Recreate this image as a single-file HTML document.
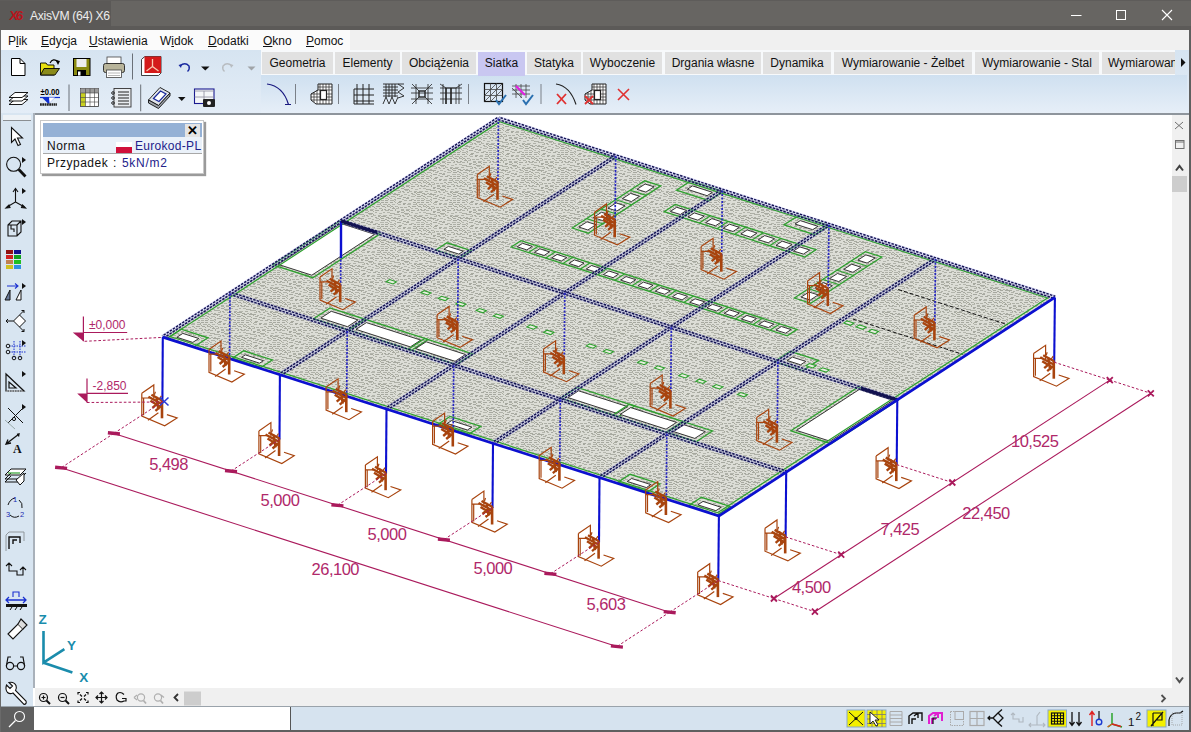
<!DOCTYPE html>
<html><head><meta charset="utf-8"><style>
*{margin:0;padding:0;box-sizing:border-box}
html,body{width:1191px;height:732px;overflow:hidden;background:#fff;font-family:"Liberation Sans",sans-serif}
.a{position:absolute}
#title{left:0;top:0;width:1191px;height:30px;background:linear-gradient(#5e5c5a 0,#5e5c5a 1px,#676562 1px,#676562 26px,#5c5a58 26px)}
#titlea{left:0;top:1px;width:111px;height:29px;background:#5b5957}
#menu{left:0;top:30px;width:1191px;height:20px;background:#f0f0f0}
#menuw{left:0;top:30px;width:350px;height:20px;background:#fbfbfb}
.mi{position:absolute;top:34px;font-size:12px;color:#111}
#tb{left:0;top:50px;width:1191px;height:64px;background:linear-gradient(#d6e4f1,#e4edf7)}
#tabs{left:261px;top:50px;width:914px;height:26px;background:#f7f9fb}
.tab{position:absolute;top:52px;height:22px;background:#e1e1e1;font-size:12px;color:#111;text-align:center;line-height:22px}
#ttb{left:261px;top:75px;width:926px;height:39px;background:linear-gradient(#cfe0f0,#e7eff8)}
#tbbot{left:33px;top:113px;width:1158px;height:2px;background:#8e959c}
#lt{left:0;top:113px;width:33px;height:594px;background:#d8e5f1}
#grip{left:3px;top:115px;width:28px;height:6px;background:#eef2f6;border-bottom:1px solid #8a8e92}
#ltb{left:33px;top:113px;width:2px;height:575px;background:#a9b1ba}
#rs{left:1172px;top:115px;width:17px;height:592px;background:#f0f0f0}
#bt{left:35px;top:688px;width:1137px;height:19px;background:#f0f0f0}
#sb{left:0;top:706px;width:1191px;height:26px;background:#d6e3ef}
#sbl{left:0;top:706px;width:1191px;height:1px;background:#9aa3ab}
#srch{left:0;top:707px;width:34px;height:23px;background:#5f5f5f}
#inp{left:34px;top:707px;width:257px;height:23px;background:#fff;border-right:1px solid #555}
#bb{left:0;top:730px;width:1191px;height:2px;background:#5f5f5f}
#rb{left:1189px;top:30px;width:2px;height:702px;background:#5f5f5f}
#lb{left:0;top:30px;width:1px;height:702px;background:#6a6a6a}
svg{position:absolute;left:0;top:0}
</style></head><body>
<div class="a" id="title"></div>
<div class="a" id="titlea"></div>
<div class="a" id="menu"></div>
<div class="a" id="menuw"></div>
<div class="a" id="tb"></div>
<div class="a" id="tabs"></div>
<div class="a" id="ttb"></div>
<div class="a" id="tbbot"></div>
<div class="a" id="lt"></div>
<div class="a" id="ltb"></div>
<div class="a" id="grip"></div>
<div class="a" id="rs"></div>
<div class="a" id="bt"></div>
<div class="a" id="sb"></div>
<div class="a" id="sbl"></div>
<div class="a" id="srch"></div>
<div class="a" id="inp"></div>
<div class="a" id="bb"></div>
<div class="a" id="rb"></div>
<div class="a" id="lb"></div>
<div class="a" style="left:30px;top:9px;font-size:12.2px;color:#ececec;letter-spacing:-0.35px">AxisVM (64) X6</div>
<div class="a mi" style="left:8px"><u style="text-decoration:none">P</u><u>l</u>ik</div>
<div class="a mi" style="left:41px"><u>E</u>dycja</div>
<div class="a mi" style="left:89px"><u>U</u>stawienia</div>
<div class="a mi" style="left:160px">W<u>i</u>dok</div>
<div class="a mi" style="left:208px"><u>D</u>odatki</div>
<div class="a mi" style="left:263px"><u>O</u>kno</div>
<div class="a mi" style="left:306px"><u>P</u>omoc</div>
<div class="tab" style="left:262px;width:71px">Geometria</div>
<div class="tab" style="left:335px;width:65px">Elementy</div>
<div class="tab" style="left:402px;width:74px">Obciążenia</div>
<div class="tab" style="left:478px;width:47px;height:24px;background:#c9c7f1">Siatka</div>
<div class="tab" style="left:527px;width:54px">Statyka</div>
<div class="tab" style="left:583px;width:79px">Wyboczenie</div>
<div class="tab" style="left:665px;width:96px">Drgania własne</div>
<div class="tab" style="left:763px;width:68px">Dynamika</div>
<div class="tab" style="left:834px;width:138px">Wymiarowanie - Żelbet</div>
<div class="tab" style="left:975px;width:124px">Wymiarowanie - Stal</div>
<div class="tab" style="left:1102px;width:73px;text-align:left;padding-left:6px;overflow:hidden;white-space:nowrap">Wymiarowanie</div>
<div class="a" style="left:40px;top:120px;width:164px;height:54px;background:#fff;border:1px solid #c8c8c8;box-shadow:2px 2px 1px #9a9a9a"></div>
<div class="a" style="left:43px;top:123px;width:159px;height:14px;background:#95b1d5"></div>
<div class="a" style="left:185px;top:124px;width:15px;height:13px;background:#e4e4e4;font-size:13px;font-weight:bold;line-height:13px;text-align:center;color:#000">✕</div>
<div class="a" style="left:43px;top:137px;width:159px;height:17px;background:#eaf1f9;border-bottom:1px solid #a8a8a8"></div>
<div class="a" style="left:47px;top:139px;font-size:12px;letter-spacing:0.5px;color:#111">Norma</div>
<div class="a" style="left:116px;top:142px;width:16px;height:5px;background:#fff"></div>
<div class="a" style="left:116px;top:147px;width:16px;height:6px;background:#d0103a"></div>
<div class="a" style="left:135px;top:139px;font-size:12px;letter-spacing:0.3px;color:#22228a">Eurokod-PL</div>
<div class="a" style="left:47px;top:156px;font-size:12px;letter-spacing:0.5px;color:#111">Przypadek</div><div class="a" style="left:113px;top:156px;font-size:12px;color:#111">:</div><div class="a" style="left:122px;top:156px;font-size:12px;letter-spacing:0.7px;color:#22228a">5kN/m2</div>

<svg width="1191" height="732" viewBox="0 0 1191 732">
<defs><pattern id="mesh" width="36" height="24" patternUnits="userSpaceOnUse"><rect width="36" height="24" fill="#dcddd6"/><rect x="2" y="0" width="3" height="1" fill="#b4b6ad"/><rect x="7" y="0" width="2" height="1" fill="#b4b6ad"/><rect x="11" y="0" width="2" height="1" fill="#a6a89f"/><rect x="15" y="1" width="2" height="1" fill="#a6a89f"/><rect x="18" y="0" width="2" height="1" fill="#a6a89f"/><rect x="20" y="1" width="1" height="1" fill="#a8aa9c"/><rect x="22" y="0" width="4" height="1" fill="#a6a89f"/><rect x="26" y="1" width="1" height="1" fill="#a8aa9c"/><rect x="27" y="1" width="2" height="1" fill="#a6a89f"/><rect x="31" y="1" width="2" height="1" fill="#aeb0a7"/><rect x="33" y="2" width="1" height="1" fill="#a8aa9c"/><rect x="34" y="1" width="2" height="1" fill="#aeb0a7"/><rect x="0" y="2" width="4" height="1" fill="#a6a89f"/><rect x="5" y="3" width="2" height="1" fill="#aeb0a7"/><rect x="8" y="2" width="3" height="1" fill="#b4b6ad"/><rect x="12" y="3" width="2" height="1" fill="#b4b6ad"/><rect x="16" y="2" width="3" height="1" fill="#b4b6ad"/><rect x="19" y="3" width="1" height="1" fill="#a8aa9c"/><rect x="21" y="2" width="3" height="1" fill="#a6a89f"/><rect x="25" y="3" width="2" height="1" fill="#a6a89f"/><rect x="28" y="2" width="3" height="1" fill="#a6a89f"/><rect x="33" y="2" width="3" height="1" fill="#a6a89f"/><rect x="1" y="3" width="1" height="1" fill="#a8aa9c"/><rect x="3" y="4" width="3" height="1" fill="#aeb0a7"/><rect x="7" y="5" width="3" height="1" fill="#a6a89f"/><rect x="11" y="5" width="2" height="1" fill="#aeb0a7"/><rect x="15" y="4" width="4" height="1" fill="#b4b6ad"/><rect x="21" y="4" width="4" height="1" fill="#a6a89f"/><rect x="27" y="4" width="2" height="1" fill="#a6a89f"/><rect x="29" y="5" width="1" height="1" fill="#a8aa9c"/><rect x="31" y="4" width="4" height="1" fill="#aeb0a7"/><rect x="35" y="5" width="1" height="1" fill="#a8aa9c"/><rect x="1" y="6" width="4" height="1" fill="#a6a89f"/><rect x="6" y="7" width="2" height="1" fill="#b4b6ad"/><rect x="8" y="8" width="1" height="1" fill="#a8aa9c"/><rect x="10" y="6" width="3" height="1" fill="#a6a89f"/><rect x="15" y="7" width="3" height="1" fill="#b4b6ad"/><rect x="20" y="6" width="4" height="1" fill="#b4b6ad"/><rect x="25" y="6" width="3" height="1" fill="#b4b6ad"/><rect x="28" y="7" width="1" height="1" fill="#a8aa9c"/><rect x="30" y="6" width="2" height="1" fill="#b4b6ad"/><rect x="34" y="7" width="2" height="1" fill="#aeb0a7"/><rect x="3" y="9" width="3" height="1" fill="#a6a89f"/><rect x="8" y="8" width="3" height="1" fill="#aeb0a7"/><rect x="13" y="8" width="3" height="1" fill="#a6a89f"/><rect x="18" y="8" width="2" height="1" fill="#a6a89f"/><rect x="21" y="8" width="3" height="1" fill="#aeb0a7"/><rect x="25" y="8" width="3" height="1" fill="#a6a89f"/><rect x="30" y="8" width="4" height="1" fill="#aeb0a7"/><rect x="34" y="9" width="1" height="1" fill="#a8aa9c"/><rect x="35" y="8" width="1" height="1" fill="#b4b6ad"/><rect x="3" y="9" width="1" height="1" fill="#a8aa9c"/><rect x="2" y="10" width="3" height="1" fill="#a6a89f"/><rect x="7" y="11" width="3" height="1" fill="#a6a89f"/><rect x="12" y="11" width="3" height="1" fill="#b4b6ad"/><rect x="17" y="10" width="3" height="1" fill="#a6a89f"/><rect x="20" y="11" width="1" height="1" fill="#a8aa9c"/><rect x="21" y="10" width="3" height="1" fill="#a6a89f"/><rect x="25" y="10" width="3" height="1" fill="#a6a89f"/><rect x="30" y="10" width="3" height="1" fill="#a6a89f"/><rect x="35" y="10" width="1" height="1" fill="#aeb0a7"/><rect x="1" y="11" width="1" height="1" fill="#a8aa9c"/><rect x="2" y="12" width="3" height="1" fill="#b4b6ad"/><rect x="7" y="12" width="2" height="1" fill="#a6a89f"/><rect x="11" y="12" width="4" height="1" fill="#b4b6ad"/><rect x="17" y="12" width="4" height="1" fill="#aeb0a7"/><rect x="21" y="13" width="1" height="1" fill="#a8aa9c"/><rect x="23" y="12" width="4" height="1" fill="#aeb0a7"/><rect x="27" y="13" width="1" height="1" fill="#a8aa9c"/><rect x="28" y="12" width="2" height="1" fill="#aeb0a7"/><rect x="30" y="13" width="1" height="1" fill="#a8aa9c"/><rect x="32" y="12" width="3" height="1" fill="#b4b6ad"/><rect x="0" y="14" width="2" height="1" fill="#b4b6ad"/><rect x="2" y="15" width="1" height="1" fill="#a8aa9c"/><rect x="4" y="15" width="3" height="1" fill="#aeb0a7"/><rect x="8" y="15" width="3" height="1" fill="#aeb0a7"/><rect x="12" y="14" width="2" height="1" fill="#a6a89f"/><rect x="14" y="15" width="1" height="1" fill="#a8aa9c"/><rect x="16" y="14" width="4" height="1" fill="#a6a89f"/><rect x="22" y="14" width="3" height="1" fill="#a6a89f"/><rect x="25" y="15" width="1" height="1" fill="#a8aa9c"/><rect x="27" y="14" width="3" height="1" fill="#aeb0a7"/><rect x="30" y="15" width="1" height="1" fill="#a8aa9c"/><rect x="31" y="14" width="2" height="1" fill="#a6a89f"/><rect x="33" y="15" width="1" height="1" fill="#a8aa9c"/><rect x="35" y="14" width="1" height="1" fill="#a6a89f"/><rect x="0" y="16" width="3" height="1" fill="#b4b6ad"/><rect x="5" y="17" width="3" height="1" fill="#aeb0a7"/><rect x="10" y="17" width="4" height="1" fill="#b4b6ad"/><rect x="15" y="16" width="2" height="1" fill="#b4b6ad"/><rect x="19" y="16" width="3" height="1" fill="#aeb0a7"/><rect x="22" y="17" width="1" height="1" fill="#a8aa9c"/><rect x="24" y="17" width="2" height="1" fill="#a6a89f"/><rect x="28" y="17" width="2" height="1" fill="#a6a89f"/><rect x="32" y="16" width="3" height="1" fill="#a6a89f"/><rect x="35" y="17" width="1" height="1" fill="#a8aa9c"/><rect x="1" y="19" width="3" height="1" fill="#a6a89f"/><rect x="5" y="18" width="3" height="1" fill="#aeb0a7"/><rect x="8" y="19" width="1" height="1" fill="#a8aa9c"/><rect x="10" y="18" width="3" height="1" fill="#a6a89f"/><rect x="13" y="19" width="1" height="1" fill="#a8aa9c"/><rect x="15" y="18" width="4" height="1" fill="#a6a89f"/><rect x="21" y="18" width="2" height="1" fill="#aeb0a7"/><rect x="25" y="18" width="4" height="1" fill="#aeb0a7"/><rect x="30" y="18" width="3" height="1" fill="#aeb0a7"/><rect x="35" y="18" width="1" height="1" fill="#a6a89f"/><rect x="1" y="20" width="2" height="1" fill="#a6a89f"/><rect x="5" y="20" width="3" height="1" fill="#a6a89f"/><rect x="8" y="21" width="1" height="1" fill="#a8aa9c"/><rect x="9" y="21" width="4" height="1" fill="#a6a89f"/><rect x="13" y="22" width="1" height="1" fill="#a8aa9c"/><rect x="15" y="20" width="2" height="1" fill="#aeb0a7"/><rect x="19" y="21" width="3" height="1" fill="#b4b6ad"/><rect x="23" y="20" width="2" height="1" fill="#aeb0a7"/><rect x="27" y="20" width="3" height="1" fill="#b4b6ad"/><rect x="30" y="21" width="1" height="1" fill="#a8aa9c"/><rect x="31" y="21" width="4" height="1" fill="#aeb0a7"/><rect x="0" y="22" width="4" height="1" fill="#aeb0a7"/><rect x="4" y="23" width="1" height="1" fill="#a8aa9c"/><rect x="6" y="23" width="2" height="1" fill="#a6a89f"/><rect x="9" y="22" width="3" height="1" fill="#b4b6ad"/><rect x="13" y="23" width="3" height="1" fill="#b4b6ad"/><rect x="18" y="23" width="3" height="1" fill="#aeb0a7"/><rect x="21" y="0" width="1" height="1" fill="#a8aa9c"/><rect x="23" y="23" width="4" height="1" fill="#b4b6ad"/><rect x="29" y="23" width="3" height="1" fill="#aeb0a7"/><rect x="34" y="22" width="2" height="1" fill="#aeb0a7"/></pattern></defs>
<polygon points="162.8,337.1 718.9,516 1054.9,297.4 498.4,118.4" fill="url(#mesh)"/>
<polygon points="272.7,264.8 312.8,277.7 380.1,233.9 340,221" fill="none" stroke="#2ea02e" stroke-width="1.3"/>
<polygon points="278.2,264.4 311.8,275.2 374.6,234.3 341,223.5" fill="#fff" stroke="#222" stroke-width="0.9"/>
<polygon points="790.9,430.8 831,443.7 898.3,399.9 858.3,387" fill="none" stroke="#2ea02e" stroke-width="1.3"/>
<polygon points="796.4,430.4 830,441.2 892.9,400.3 859.2,389.5" fill="#fff" stroke="#222" stroke-width="0.9"/>
<polygon points="167.8,338 194.4,346.6 207.9,337.8 181.2,329.2" fill="none" stroke="#2ea02e" stroke-width="1.3"/>
<polygon points="176.9,337.3 192.8,342.4 198.8,338.5 182.8,333.4" fill="#fff" stroke="#222" stroke-width="0.9"/>
<polygon points="232.5,358.1 261.2,367.3 272.4,360 243.7,350.8" fill="none" stroke="#2ea02e" stroke-width="1.3"/>
<polygon points="241.5,357.3 259.6,363.2 263.4,360.7 245.3,354.9" fill="#fff" stroke="#222" stroke-width="0.9"/>
<polygon points="688.7,505.6 717.5,514.8 730.2,506.5 701.4,497.3" fill="none" stroke="#2ea02e" stroke-width="1.3"/>
<polygon points="697.8,504.8 715.9,510.7 721.1,507.3 703,501.4" fill="#fff" stroke="#222" stroke-width="0.9"/>
<polygon points="438.1,424.2 469,434.1 480.9,426.4 450,416.4" fill="none" stroke="#2ea02e" stroke-width="1.3"/>
<polygon points="447.1,423.5 467.4,430 471.9,427.1 451.6,420.6" fill="#fff" stroke="#222" stroke-width="0.9"/>
<polygon points="618.1,482.1 647.9,491.7 659.9,483.9 630.1,474.3" fill="none" stroke="#2ea02e" stroke-width="1.3"/>
<polygon points="627.2,481.4 646.4,487.6 650.8,484.6 631.7,478.5" fill="#fff" stroke="#222" stroke-width="0.9"/>
<polygon points="774.5,361.5 802.8,370.6 818.5,360.4 790.2,351.3" fill="none" stroke="#2ea02e" stroke-width="1.3"/>
<polygon points="787.2,360.5 800.6,364.8 805.8,361.4 792.4,357.1" fill="#fff" stroke="#222" stroke-width="0.9"/>
<polygon points="313.6,318.7 348.7,330 365.2,319.3 330,308" fill="none" stroke="#2ea02e" stroke-width="1.3"/>
<polygon points="320.8,318.1 347.5,326.7 357.9,319.9 331.3,311.3" fill="#fff" stroke="#222" stroke-width="0.9"/>
<polygon points="348.7,330 411.6,350.2 428,339.5 365.2,319.3" fill="none" stroke="#2ea02e" stroke-width="1.3"/>
<polygon points="356,329.4 410.3,346.9 420.8,340.1 366.4,322.6" fill="#fff" stroke="#222" stroke-width="0.9"/>
<polygon points="408.4,349.2 456.3,364.6 472.8,353.9 424.8,338.5" fill="none" stroke="#2ea02e" stroke-width="1.3"/>
<polygon points="415.6,348.6 455.1,361.3 465.5,354.5 426.1,341.8" fill="#fff" stroke="#222" stroke-width="0.9"/>
<polygon points="560.8,398.2 618.3,416.7 634.7,406 577.2,387.5" fill="none" stroke="#2ea02e" stroke-width="1.3"/>
<polygon points="568,397.6 617,413.4 627.5,406.6 578.5,390.8" fill="#fff" stroke="#222" stroke-width="0.9"/>
<polygon points="613,415 667.3,432.5 683.8,421.8 629.4,404.3" fill="none" stroke="#2ea02e" stroke-width="1.3"/>
<polygon points="620.2,414.4 666,429.2 676.5,422.4 630.7,407.6" fill="#fff" stroke="#222" stroke-width="0.9"/>
<polygon points="666.2,432.1 696.1,441.7 712.5,431 682.7,421.4" fill="none" stroke="#2ea02e" stroke-width="1.3"/>
<polygon points="673.5,431.6 694.8,438.4 705.3,431.6 684,424.8" fill="#fff" stroke="#222" stroke-width="0.9"/>
<polygon points="435.9,250 460.2,257.8 471.3,250.6 447,242.8" fill="none" stroke="#2ea02e" stroke-width="1.3"/>
<polygon points="443.9,249.3 458.8,254.1 463.3,251.2 448.4,246.4" fill="#fff" stroke="#222" stroke-width="0.9"/>
<polygon points="676.4,190.2 709,200.7 723.3,191.4 690.6,181" fill="none" stroke="#2ea02e" stroke-width="1.3"/>
<polygon points="687.3,189.3 707.1,195.7 712.4,192.3 692.5,185.9" fill="#fff" stroke="#222" stroke-width="0.9"/>
<polygon points="784.1,224.8 814.6,234.7 828.8,225.4 798.3,215.6" fill="none" stroke="#2ea02e" stroke-width="1.3"/>
<polygon points="795,224 812.7,229.7 817.9,226.3 800.2,220.6" fill="#fff" stroke="#222" stroke-width="0.9"/>
<polygon points="511.2,247 787.3,335.8 797,329.4 521,240.6" fill="none" stroke="#2ea02e" stroke-width="1.3"/>
<polygon points="517.2,246.8 526.8,249.9 532.3,246.4 522.6,243.3" fill="#fff" stroke="#222" stroke-width="0.9"/>
<line x1="528.5" y1="252.5" x2="538.2" y2="246.2" stroke="#2ea02e" stroke-width="1.2"/>
<polygon points="534.4,252.4 544.1,255.5 549.5,251.9 539.9,248.8" fill="#fff" stroke="#222" stroke-width="0.9"/>
<line x1="545.7" y1="258.1" x2="555.5" y2="251.7" stroke="#2ea02e" stroke-width="1.2"/>
<polygon points="551.7,257.9 561.3,261 566.8,257.5 557.1,254.4" fill="#fff" stroke="#222" stroke-width="0.9"/>
<line x1="563" y1="263.6" x2="572.7" y2="257.3" stroke="#2ea02e" stroke-width="1.2"/>
<polygon points="568.9,263.5 578.6,266.6 584,263 574.4,259.9" fill="#fff" stroke="#222" stroke-width="0.9"/>
<line x1="580.2" y1="269.2" x2="590" y2="262.8" stroke="#2ea02e" stroke-width="1.2"/>
<polygon points="586.2,269 595.8,272.1 601.3,268.6 591.6,265.5" fill="#fff" stroke="#222" stroke-width="0.9"/>
<line x1="597.5" y1="274.7" x2="607.2" y2="268.4" stroke="#2ea02e" stroke-width="1.2"/>
<polygon points="603.4,274.6 613.1,277.7 618.5,274.1 608.9,271" fill="#fff" stroke="#222" stroke-width="0.9"/>
<line x1="614.7" y1="280.3" x2="624.5" y2="273.9" stroke="#2ea02e" stroke-width="1.2"/>
<polygon points="620.7,280.1 630.3,283.2 635.8,279.7 626.1,276.6" fill="#fff" stroke="#222" stroke-width="0.9"/>
<line x1="632" y1="285.8" x2="641.7" y2="279.5" stroke="#2ea02e" stroke-width="1.2"/>
<polygon points="637.9,285.7 647.6,288.8 653,285.2 643.4,282.1" fill="#fff" stroke="#222" stroke-width="0.9"/>
<line x1="649.2" y1="291.4" x2="659" y2="285" stroke="#2ea02e" stroke-width="1.2"/>
<polygon points="655.2,291.2 664.8,294.3 670.3,290.8 660.6,287.7" fill="#fff" stroke="#222" stroke-width="0.9"/>
<line x1="666.5" y1="296.9" x2="676.2" y2="290.6" stroke="#2ea02e" stroke-width="1.2"/>
<polygon points="672.4,296.8 682.1,299.9 687.5,296.3 677.9,293.2" fill="#fff" stroke="#222" stroke-width="0.9"/>
<line x1="683.8" y1="302.5" x2="693.5" y2="296.1" stroke="#2ea02e" stroke-width="1.2"/>
<polygon points="689.7,302.3 699.3,305.4 704.8,301.9 695.1,298.8" fill="#fff" stroke="#222" stroke-width="0.9"/>
<line x1="701" y1="308" x2="710.7" y2="301.7" stroke="#2ea02e" stroke-width="1.2"/>
<polygon points="706.9,307.9 716.6,311 722,307.4 712.4,304.3" fill="#fff" stroke="#222" stroke-width="0.9"/>
<line x1="718.3" y1="313.6" x2="728" y2="307.2" stroke="#2ea02e" stroke-width="1.2"/>
<polygon points="724.2,313.4 733.9,316.5 739.3,313 729.6,309.9" fill="#fff" stroke="#222" stroke-width="0.9"/>
<line x1="735.5" y1="319.1" x2="745.2" y2="312.8" stroke="#2ea02e" stroke-width="1.2"/>
<polygon points="741.4,319 751.1,322.1 756.5,318.5 746.9,315.4" fill="#fff" stroke="#222" stroke-width="0.9"/>
<line x1="752.8" y1="324.7" x2="762.5" y2="318.3" stroke="#2ea02e" stroke-width="1.2"/>
<polygon points="758.7,324.5 768.4,327.6 773.8,324.1 764.1,321" fill="#fff" stroke="#222" stroke-width="0.9"/>
<line x1="770" y1="330.2" x2="779.7" y2="323.9" stroke="#2ea02e" stroke-width="1.2"/>
<polygon points="775.9,330.1 785.6,333.2 791.1,329.6 781.4,326.5" fill="#fff" stroke="#222" stroke-width="0.9"/>
<polygon points="572.2,228 588.2,233.2 660.7,185.9 644.8,180.8" fill="none" stroke="#2ea02e" stroke-width="1.3"/>
<polygon points="578.9,227.1 587.9,230 596,224.7 587,221.8" fill="#fff" stroke="#222" stroke-width="0.9"/>
<line x1="586.7" y1="218.6" x2="602.7" y2="223.7" stroke="#2ea02e" stroke-width="1.2"/>
<polygon points="593.4,217.6 602.4,220.5 610.5,215.2 601.5,212.3" fill="#fff" stroke="#222" stroke-width="0.9"/>
<line x1="601.2" y1="209.1" x2="617.2" y2="214.3" stroke="#2ea02e" stroke-width="1.2"/>
<polygon points="607.9,208.2 616.9,211 625,205.8 616.1,202.9" fill="#fff" stroke="#222" stroke-width="0.9"/>
<line x1="615.7" y1="199.7" x2="631.7" y2="204.8" stroke="#2ea02e" stroke-width="1.2"/>
<polygon points="622.4,198.7 631.4,201.6 639.5,196.3 630.6,193.4" fill="#fff" stroke="#222" stroke-width="0.9"/>
<line x1="630.2" y1="190.2" x2="646.2" y2="195.4" stroke="#2ea02e" stroke-width="1.2"/>
<polygon points="637,189.3 645.9,192.1 654,186.8 645.1,184" fill="#fff" stroke="#222" stroke-width="0.9"/>
<polygon points="664.1,211.7 804.8,257 816,249.7 675.3,204.4" fill="none" stroke="#2ea02e" stroke-width="1.3"/>
<polygon points="670.4,211.4 680.3,214.5 686.6,210.4 676.7,207.3" fill="#fff" stroke="#222" stroke-width="0.9"/>
<line x1="681.7" y1="217.4" x2="692.9" y2="210.1" stroke="#2ea02e" stroke-width="1.2"/>
<polygon points="688,217 697.9,220.2 704.2,216.1 694.3,212.9" fill="#fff" stroke="#222" stroke-width="0.9"/>
<line x1="699.3" y1="223" x2="710.5" y2="215.7" stroke="#2ea02e" stroke-width="1.2"/>
<polygon points="705.6,222.7 715.5,225.8 721.7,221.8 711.9,218.6" fill="#fff" stroke="#222" stroke-width="0.9"/>
<line x1="716.9" y1="228.7" x2="728.1" y2="221.4" stroke="#2ea02e" stroke-width="1.2"/>
<polygon points="723.2,228.3 733,231.5 739.3,227.4 729.5,224.2" fill="#fff" stroke="#222" stroke-width="0.9"/>
<line x1="734.4" y1="234.4" x2="745.7" y2="227" stroke="#2ea02e" stroke-width="1.2"/>
<polygon points="740.8,234 750.6,237.2 756.9,233.1 747.1,229.9" fill="#fff" stroke="#222" stroke-width="0.9"/>
<line x1="752" y1="240" x2="763.3" y2="232.7" stroke="#2ea02e" stroke-width="1.2"/>
<polygon points="758.4,239.7 768.2,242.8 774.5,238.7 764.7,235.6" fill="#fff" stroke="#222" stroke-width="0.9"/>
<line x1="769.6" y1="245.7" x2="780.8" y2="238.4" stroke="#2ea02e" stroke-width="1.2"/>
<polygon points="776,245.3 785.8,248.5 792.1,244.4 782.2,241.2" fill="#fff" stroke="#222" stroke-width="0.9"/>
<line x1="787.2" y1="251.3" x2="798.4" y2="244" stroke="#2ea02e" stroke-width="1.2"/>
<polygon points="793.5,251 803.4,254.1 809.7,250 799.8,246.9" fill="#fff" stroke="#222" stroke-width="0.9"/>
<polygon points="794.3,298 810.7,303.3 881.8,257 865.4,251.7" fill="none" stroke="#2ea02e" stroke-width="1.3"/>
<polygon points="801.1,297.1 810.2,300.1 818.2,294.9 809,292" fill="#fff" stroke="#222" stroke-width="0.9"/>
<line x1="808.5" y1="288.8" x2="824.9" y2="294" stroke="#2ea02e" stroke-width="1.2"/>
<polygon points="815.3,287.9 824.5,290.8 832.4,285.7 823.2,282.7" fill="#fff" stroke="#222" stroke-width="0.9"/>
<line x1="822.8" y1="279.5" x2="839.2" y2="284.8" stroke="#2ea02e" stroke-width="1.2"/>
<polygon points="829.5,278.6 838.7,281.6 846.6,276.4 837.5,273.5" fill="#fff" stroke="#222" stroke-width="0.9"/>
<line x1="837" y1="270.3" x2="853.4" y2="275.5" stroke="#2ea02e" stroke-width="1.2"/>
<polygon points="843.7,269.4 852.9,272.3 860.9,267.2 851.7,264.2" fill="#fff" stroke="#222" stroke-width="0.9"/>
<line x1="851.2" y1="261" x2="867.6" y2="266.3" stroke="#2ea02e" stroke-width="1.2"/>
<polygon points="857.9,260.1 867.1,263.1 875.1,257.9 865.9,254.9" fill="#fff" stroke="#222" stroke-width="0.9"/>
<polygon points="386.3,281.7 393.1,283.9 396.4,281.8 389.6,279.6" fill="#e8eee0" stroke="#2ea02e" stroke-width="1.1"/>
<polygon points="420.8,292.8 427.6,295 430.9,292.9 424.1,290.7" fill="#e8eee0" stroke="#2ea02e" stroke-width="1.1"/>
<polygon points="438.3,298.4 445.1,300.6 448.4,298.5 441.6,296.3" fill="#e8eee0" stroke="#2ea02e" stroke-width="1.1"/>
<polygon points="455.7,304.1 462.6,306.3 465.8,304.1 459,301.9" fill="#e8eee0" stroke="#2ea02e" stroke-width="1.1"/>
<polygon points="476.2,310.6 483,312.8 486.3,310.7 479.5,308.5" fill="#e8eee0" stroke="#2ea02e" stroke-width="1.1"/>
<polygon points="493.2,316.1 500.1,318.3 503.4,316.2 496.5,314" fill="#e8eee0" stroke="#2ea02e" stroke-width="1.1"/>
<polygon points="526.9,327 533.7,329.2 537,327 530.2,324.8" fill="#e8eee0" stroke="#2ea02e" stroke-width="1.1"/>
<polygon points="543.8,332.4 550.6,334.6 553.9,332.4 547,330.2" fill="#e8eee0" stroke="#2ea02e" stroke-width="1.1"/>
<polygon points="586.2,346 593,348.2 596.3,346.1 589.5,343.9" fill="#e8eee0" stroke="#2ea02e" stroke-width="1.1"/>
<polygon points="603.2,351.5 610,353.7 613.3,351.6 606.5,349.4" fill="#e8eee0" stroke="#2ea02e" stroke-width="1.1"/>
<polygon points="637.5,362.5 644.3,364.7 647.6,362.6 640.8,360.4" fill="#e8eee0" stroke="#2ea02e" stroke-width="1.1"/>
<polygon points="654.4,368 661.2,370.2 664.5,368 657.7,365.8" fill="#e8eee0" stroke="#2ea02e" stroke-width="1.1"/>
<polygon points="678.7,375.8 685.5,378 688.8,375.8 682,373.6" fill="#e8eee0" stroke="#2ea02e" stroke-width="1.1"/>
<polygon points="695.9,381.3 702.7,383.5 706,381.4 699.2,379.2" fill="#e8eee0" stroke="#2ea02e" stroke-width="1.1"/>
<polygon points="712.8,386.7 719.6,388.9 722.9,386.8 716.1,384.6" fill="#e8eee0" stroke="#2ea02e" stroke-width="1.1"/>
<polygon points="737.3,394.6 744.1,396.8 747.4,394.7 740.6,392.5" fill="#e8eee0" stroke="#2ea02e" stroke-width="1.1"/>
<polygon points="843.7,323.1 850.5,325.3 853.8,323.1 847,320.9" fill="#e8eee0" stroke="#2ea02e" stroke-width="1.1"/>
<polygon points="856.1,327.1 862.9,329.3 866.2,327.1 859.4,324.9" fill="#e8eee0" stroke="#2ea02e" stroke-width="1.1"/>
<polygon points="868.4,331.5 875.2,333.7 878.5,331.5 871.7,329.3" fill="#e8eee0" stroke="#2ea02e" stroke-width="1.1"/>
<polygon points="806,365.7 812.8,367.9 816.1,365.7 809.3,363.5" fill="#e8eee0" stroke="#2ea02e" stroke-width="1.1"/>
<polygon points="819.2,369.9 826,372.1 829.3,370 822.5,367.8" fill="#e8eee0" stroke="#2ea02e" stroke-width="1.1"/>
<line x1="852.8" y1="319" x2="962.6" y2="354.3" stroke="#111" stroke-width="1" stroke-dasharray="4,2"/>
<line x1="898.2" y1="289.5" x2="1008" y2="324.8" stroke="#111" stroke-width="1" stroke-dasharray="4,2"/>
<polygon points="170,336.5 717.6,512.7 1047.6,298 499.7,121.7" fill="none" stroke="#2ea02e" stroke-width="1.2"/>
<line x1="230" y1="293.3" x2="786.2" y2="472.2" stroke="#a0a0f0" stroke-width="4.8" opacity="0.35"/>
<line x1="229.7" y1="294.4" x2="785.8" y2="473.3" stroke="#121250" stroke-width="1.45" stroke-dasharray="2.4,1.3"/>
<line x1="230.4" y1="292.1" x2="786.6" y2="471" stroke="#121250" stroke-width="1.45" stroke-dasharray="2.4,1.3" stroke-dashoffset="1.9"/>
<line x1="341" y1="221" x2="897.3" y2="399.9" stroke="#a0a0f0" stroke-width="4.8" opacity="0.35"/>
<line x1="340.6" y1="222.1" x2="896.9" y2="401.1" stroke="#121250" stroke-width="1.45" stroke-dasharray="2.4,1.3"/>
<line x1="341.4" y1="219.8" x2="897.7" y2="398.8" stroke="#121250" stroke-width="1.45" stroke-dasharray="2.4,1.3" stroke-dashoffset="1.9"/>
<line x1="279.9" y1="374.8" x2="615.7" y2="156.1" stroke="#a0a0f0" stroke-width="4.8" opacity="0.35"/>
<line x1="280.6" y1="375.8" x2="616.3" y2="157.1" stroke="#121250" stroke-width="1.45" stroke-dasharray="2.4,1.3"/>
<line x1="279.3" y1="373.8" x2="615" y2="155.1" stroke="#121250" stroke-width="1.45" stroke-dasharray="2.4,1.3" stroke-dashoffset="1.9"/>
<line x1="386.5" y1="409.1" x2="722.3" y2="190.4" stroke="#a0a0f0" stroke-width="4.8" opacity="0.35"/>
<line x1="387.1" y1="410.1" x2="722.9" y2="191.4" stroke="#121250" stroke-width="1.45" stroke-dasharray="2.4,1.3"/>
<line x1="385.8" y1="408" x2="721.6" y2="189.4" stroke="#121250" stroke-width="1.45" stroke-dasharray="2.4,1.3" stroke-dashoffset="1.9"/>
<line x1="493" y1="443.3" x2="828.9" y2="224.7" stroke="#a0a0f0" stroke-width="4.8" opacity="0.35"/>
<line x1="493.7" y1="444.3" x2="829.5" y2="225.7" stroke="#121250" stroke-width="1.45" stroke-dasharray="2.4,1.3"/>
<line x1="492.3" y1="442.3" x2="828.2" y2="223.7" stroke="#121250" stroke-width="1.45" stroke-dasharray="2.4,1.3" stroke-dashoffset="1.9"/>
<line x1="599.5" y1="477.6" x2="935.5" y2="259" stroke="#a0a0f0" stroke-width="4.8" opacity="0.35"/>
<line x1="600.2" y1="478.6" x2="936.1" y2="260" stroke="#121250" stroke-width="1.45" stroke-dasharray="2.4,1.3"/>
<line x1="598.9" y1="476.6" x2="934.8" y2="258" stroke="#121250" stroke-width="1.45" stroke-dasharray="2.4,1.3" stroke-dashoffset="1.9"/>
<line x1="162.8" y1="337.1" x2="498.4" y2="118.4" stroke="#a0a0f0" stroke-width="4.8" opacity="0.35"/>
<line x1="163.4" y1="338.1" x2="499.1" y2="119.4" stroke="#121250" stroke-width="1.45" stroke-dasharray="2.4,1.3"/>
<line x1="162.1" y1="336.1" x2="497.8" y2="117.4" stroke="#121250" stroke-width="1.45" stroke-dasharray="2.4,1.3" stroke-dashoffset="1.9"/>
<line x1="498.4" y1="118.4" x2="1054.9" y2="297.4" stroke="#a0a0f0" stroke-width="4.8" opacity="0.35"/>
<line x1="498.1" y1="119.5" x2="1054.5" y2="298.5" stroke="#121250" stroke-width="1.45" stroke-dasharray="2.4,1.3"/>
<line x1="498.8" y1="117.2" x2="1055.3" y2="296.3" stroke="#121250" stroke-width="1.45" stroke-dasharray="2.4,1.3" stroke-dashoffset="1.9"/>
<line x1="230" y1="293.3" x2="229.6" y2="358" stroke="#2626c0" stroke-width="1.7" stroke-dasharray="2.2,1.3"/>
<line x1="341" y1="221" x2="340.6" y2="285.7" stroke="#2626c0" stroke-width="1.7" stroke-dasharray="2.2,1.3"/>
<line x1="498.4" y1="118.4" x2="497.9" y2="183.2" stroke="#2626c0" stroke-width="1.7" stroke-dasharray="2.2,1.3"/>
<line x1="347.2" y1="331" x2="346.7" y2="395.7" stroke="#2626c0" stroke-width="1.7" stroke-dasharray="2.2,1.3"/>
<line x1="458.2" y1="258.7" x2="457.7" y2="323.4" stroke="#2626c0" stroke-width="1.7" stroke-dasharray="2.2,1.3"/>
<line x1="615.7" y1="156.1" x2="615.1" y2="220.9" stroke="#2626c0" stroke-width="1.7" stroke-dasharray="2.2,1.3"/>
<line x1="453.7" y1="365.2" x2="453.2" y2="430" stroke="#2626c0" stroke-width="1.7" stroke-dasharray="2.2,1.3"/>
<line x1="564.8" y1="292.9" x2="564.2" y2="357.7" stroke="#2626c0" stroke-width="1.7" stroke-dasharray="2.2,1.3"/>
<line x1="722.3" y1="190.4" x2="721.7" y2="255.2" stroke="#2626c0" stroke-width="1.7" stroke-dasharray="2.2,1.3"/>
<line x1="560.3" y1="399.5" x2="559.8" y2="464.2" stroke="#2626c0" stroke-width="1.7" stroke-dasharray="2.2,1.3"/>
<line x1="671.3" y1="327.2" x2="670.8" y2="392" stroke="#2626c0" stroke-width="1.7" stroke-dasharray="2.2,1.3"/>
<line x1="828.9" y1="224.7" x2="828.2" y2="289.5" stroke="#2626c0" stroke-width="1.7" stroke-dasharray="2.2,1.3"/>
<line x1="666.8" y1="433.8" x2="666.3" y2="498.5" stroke="#2626c0" stroke-width="1.7" stroke-dasharray="2.2,1.3"/>
<line x1="777.9" y1="361.5" x2="777.3" y2="426.2" stroke="#2626c0" stroke-width="1.7" stroke-dasharray="2.2,1.3"/>
<line x1="935.5" y1="259" x2="934.8" y2="323.8" stroke="#2626c0" stroke-width="1.7" stroke-dasharray="2.2,1.3"/>
<line x1="341" y1="221" x2="341" y2="258" stroke="#0c10d0" stroke-width="2.4"/>
<line x1="341" y1="221" x2="377.3" y2="232.6" stroke="#121250" stroke-width="3"/>
<line x1="861.1" y1="388.3" x2="897.3" y2="399.9" stroke="#121250" stroke-width="3"/>
<line x1="162.8" y1="337.1" x2="162.4" y2="401.8" stroke="#0c10d0" stroke-width="2.1"/>
<line x1="279.9" y1="374.8" x2="279.5" y2="439.5" stroke="#0c10d0" stroke-width="2.1"/>
<line x1="386.5" y1="409.1" x2="386" y2="473.7" stroke="#0c10d0" stroke-width="2.1"/>
<line x1="493" y1="443.3" x2="492.5" y2="508" stroke="#0c10d0" stroke-width="2.1"/>
<line x1="599.5" y1="477.6" x2="599" y2="542.2" stroke="#0c10d0" stroke-width="2.1"/>
<line x1="718.9" y1="516" x2="718.3" y2="580.6" stroke="#0c10d0" stroke-width="2.1"/>
<line x1="786.2" y1="472.2" x2="785.6" y2="536.9" stroke="#0c10d0" stroke-width="2.1"/>
<line x1="897.3" y1="399.9" x2="896.7" y2="464.6" stroke="#0c10d0" stroke-width="2.1"/>
<line x1="1054.9" y1="297.4" x2="1054.2" y2="362.2" stroke="#0c10d0" stroke-width="2.1"/>
<polyline points="162.8,337.1 718.9,516 1054.9,297.4" fill="none" stroke="#0c10d0" stroke-width="2.7"/>
<g transform="translate(162.4,401.8)"><g stroke="#a8440e" fill="none" stroke-width="1.2"><path d="M-20.6,-8.6 L-8.6,-16.9 V-3 M-20.6,-8.6 V14.3 L2.3,24 L14.7,16.2 L4.5,12.8"/><path d="M-20.6,-3.8 H-13 M-18.8,-3.8 V13.5 M-14.5,18.5 L-4,11"/><path d="M-0.4,-1 V16.5" stroke-width="2.6"/><path d="M-14,-5 L-1,2 M-11,-7 L0,-1 M-12,-1 L-2,5 M-3,0 L-10,6 M-1,4 L-7,9 M-6,-5 L-4,8" stroke-width="2.4"/><path d="M-3,-3 L-1,-6 M-8,-7 L-7,-10" stroke-width="1.2"/></g></g>
<g transform="translate(229.6,358)"><g stroke="#a8440e" fill="none" stroke-width="1.2"><path d="M-20.6,-8.6 L-8.6,-16.9 V-3 M-20.6,-8.6 V14.3 L2.3,24 L14.7,16.2 L4.5,12.8"/><path d="M-20.6,-3.8 H-13 M-18.8,-3.8 V13.5 M-14.5,18.5 L-4,11"/><path d="M-0.4,-1 V16.5" stroke-width="2.6"/><path d="M-14,-5 L-1,2 M-11,-7 L0,-1 M-12,-1 L-2,5 M-3,0 L-10,6 M-1,4 L-7,9 M-6,-5 L-4,8" stroke-width="2.4"/><path d="M-3,-3 L-1,-6 M-8,-7 L-7,-10" stroke-width="1.2"/></g></g>
<g transform="translate(340.6,285.7)"><g stroke="#a8440e" fill="none" stroke-width="1.2"><path d="M-20.6,-8.6 L-8.6,-16.9 V-3 M-20.6,-8.6 V14.3 L2.3,24 L14.7,16.2 L4.5,12.8"/><path d="M-20.6,-3.8 H-13 M-18.8,-3.8 V13.5 M-14.5,18.5 L-4,11"/><path d="M-0.4,-1 V16.5" stroke-width="2.6"/><path d="M-14,-5 L-1,2 M-11,-7 L0,-1 M-12,-1 L-2,5 M-3,0 L-10,6 M-1,4 L-7,9 M-6,-5 L-4,8" stroke-width="2.4"/><path d="M-3,-3 L-1,-6 M-8,-7 L-7,-10" stroke-width="1.2"/></g></g>
<g transform="translate(497.9,183.2)"><g stroke="#a8440e" fill="none" stroke-width="1.2"><path d="M-20.6,-8.6 L-8.6,-16.9 V-3 M-20.6,-8.6 V14.3 L2.3,24 L14.7,16.2 L4.5,12.8"/><path d="M-20.6,-3.8 H-13 M-18.8,-3.8 V13.5 M-14.5,18.5 L-4,11"/><path d="M-0.4,-1 V16.5" stroke-width="2.6"/><path d="M-14,-5 L-1,2 M-11,-7 L0,-1 M-12,-1 L-2,5 M-3,0 L-10,6 M-1,4 L-7,9 M-6,-5 L-4,8" stroke-width="2.4"/><path d="M-3,-3 L-1,-6 M-8,-7 L-7,-10" stroke-width="1.2"/></g></g>
<g transform="translate(279.5,439.5)"><g stroke="#a8440e" fill="none" stroke-width="1.2"><path d="M-20.6,-8.6 L-8.6,-16.9 V-3 M-20.6,-8.6 V14.3 L2.3,24 L14.7,16.2 L4.5,12.8"/><path d="M-20.6,-3.8 H-13 M-18.8,-3.8 V13.5 M-14.5,18.5 L-4,11"/><path d="M-0.4,-1 V16.5" stroke-width="2.6"/><path d="M-14,-5 L-1,2 M-11,-7 L0,-1 M-12,-1 L-2,5 M-3,0 L-10,6 M-1,4 L-7,9 M-6,-5 L-4,8" stroke-width="2.4"/><path d="M-3,-3 L-1,-6 M-8,-7 L-7,-10" stroke-width="1.2"/></g></g>
<g transform="translate(346.7,395.7)"><g stroke="#a8440e" fill="none" stroke-width="1.2"><path d="M-20.6,-8.6 L-8.6,-16.9 V-3 M-20.6,-8.6 V14.3 L2.3,24 L14.7,16.2 L4.5,12.8"/><path d="M-20.6,-3.8 H-13 M-18.8,-3.8 V13.5 M-14.5,18.5 L-4,11"/><path d="M-0.4,-1 V16.5" stroke-width="2.6"/><path d="M-14,-5 L-1,2 M-11,-7 L0,-1 M-12,-1 L-2,5 M-3,0 L-10,6 M-1,4 L-7,9 M-6,-5 L-4,8" stroke-width="2.4"/><path d="M-3,-3 L-1,-6 M-8,-7 L-7,-10" stroke-width="1.2"/></g></g>
<g transform="translate(457.7,323.4)"><g stroke="#a8440e" fill="none" stroke-width="1.2"><path d="M-20.6,-8.6 L-8.6,-16.9 V-3 M-20.6,-8.6 V14.3 L2.3,24 L14.7,16.2 L4.5,12.8"/><path d="M-20.6,-3.8 H-13 M-18.8,-3.8 V13.5 M-14.5,18.5 L-4,11"/><path d="M-0.4,-1 V16.5" stroke-width="2.6"/><path d="M-14,-5 L-1,2 M-11,-7 L0,-1 M-12,-1 L-2,5 M-3,0 L-10,6 M-1,4 L-7,9 M-6,-5 L-4,8" stroke-width="2.4"/><path d="M-3,-3 L-1,-6 M-8,-7 L-7,-10" stroke-width="1.2"/></g></g>
<g transform="translate(615.1,220.9)"><g stroke="#a8440e" fill="none" stroke-width="1.2"><path d="M-20.6,-8.6 L-8.6,-16.9 V-3 M-20.6,-8.6 V14.3 L2.3,24 L14.7,16.2 L4.5,12.8"/><path d="M-20.6,-3.8 H-13 M-18.8,-3.8 V13.5 M-14.5,18.5 L-4,11"/><path d="M-0.4,-1 V16.5" stroke-width="2.6"/><path d="M-14,-5 L-1,2 M-11,-7 L0,-1 M-12,-1 L-2,5 M-3,0 L-10,6 M-1,4 L-7,9 M-6,-5 L-4,8" stroke-width="2.4"/><path d="M-3,-3 L-1,-6 M-8,-7 L-7,-10" stroke-width="1.2"/></g></g>
<g transform="translate(386,473.7)"><g stroke="#a8440e" fill="none" stroke-width="1.2"><path d="M-20.6,-8.6 L-8.6,-16.9 V-3 M-20.6,-8.6 V14.3 L2.3,24 L14.7,16.2 L4.5,12.8"/><path d="M-20.6,-3.8 H-13 M-18.8,-3.8 V13.5 M-14.5,18.5 L-4,11"/><path d="M-0.4,-1 V16.5" stroke-width="2.6"/><path d="M-14,-5 L-1,2 M-11,-7 L0,-1 M-12,-1 L-2,5 M-3,0 L-10,6 M-1,4 L-7,9 M-6,-5 L-4,8" stroke-width="2.4"/><path d="M-3,-3 L-1,-6 M-8,-7 L-7,-10" stroke-width="1.2"/></g></g>
<g transform="translate(453.2,430)"><g stroke="#a8440e" fill="none" stroke-width="1.2"><path d="M-20.6,-8.6 L-8.6,-16.9 V-3 M-20.6,-8.6 V14.3 L2.3,24 L14.7,16.2 L4.5,12.8"/><path d="M-20.6,-3.8 H-13 M-18.8,-3.8 V13.5 M-14.5,18.5 L-4,11"/><path d="M-0.4,-1 V16.5" stroke-width="2.6"/><path d="M-14,-5 L-1,2 M-11,-7 L0,-1 M-12,-1 L-2,5 M-3,0 L-10,6 M-1,4 L-7,9 M-6,-5 L-4,8" stroke-width="2.4"/><path d="M-3,-3 L-1,-6 M-8,-7 L-7,-10" stroke-width="1.2"/></g></g>
<g transform="translate(564.2,357.7)"><g stroke="#a8440e" fill="none" stroke-width="1.2"><path d="M-20.6,-8.6 L-8.6,-16.9 V-3 M-20.6,-8.6 V14.3 L2.3,24 L14.7,16.2 L4.5,12.8"/><path d="M-20.6,-3.8 H-13 M-18.8,-3.8 V13.5 M-14.5,18.5 L-4,11"/><path d="M-0.4,-1 V16.5" stroke-width="2.6"/><path d="M-14,-5 L-1,2 M-11,-7 L0,-1 M-12,-1 L-2,5 M-3,0 L-10,6 M-1,4 L-7,9 M-6,-5 L-4,8" stroke-width="2.4"/><path d="M-3,-3 L-1,-6 M-8,-7 L-7,-10" stroke-width="1.2"/></g></g>
<g transform="translate(721.7,255.2)"><g stroke="#a8440e" fill="none" stroke-width="1.2"><path d="M-20.6,-8.6 L-8.6,-16.9 V-3 M-20.6,-8.6 V14.3 L2.3,24 L14.7,16.2 L4.5,12.8"/><path d="M-20.6,-3.8 H-13 M-18.8,-3.8 V13.5 M-14.5,18.5 L-4,11"/><path d="M-0.4,-1 V16.5" stroke-width="2.6"/><path d="M-14,-5 L-1,2 M-11,-7 L0,-1 M-12,-1 L-2,5 M-3,0 L-10,6 M-1,4 L-7,9 M-6,-5 L-4,8" stroke-width="2.4"/><path d="M-3,-3 L-1,-6 M-8,-7 L-7,-10" stroke-width="1.2"/></g></g>
<g transform="translate(492.5,508)"><g stroke="#a8440e" fill="none" stroke-width="1.2"><path d="M-20.6,-8.6 L-8.6,-16.9 V-3 M-20.6,-8.6 V14.3 L2.3,24 L14.7,16.2 L4.5,12.8"/><path d="M-20.6,-3.8 H-13 M-18.8,-3.8 V13.5 M-14.5,18.5 L-4,11"/><path d="M-0.4,-1 V16.5" stroke-width="2.6"/><path d="M-14,-5 L-1,2 M-11,-7 L0,-1 M-12,-1 L-2,5 M-3,0 L-10,6 M-1,4 L-7,9 M-6,-5 L-4,8" stroke-width="2.4"/><path d="M-3,-3 L-1,-6 M-8,-7 L-7,-10" stroke-width="1.2"/></g></g>
<g transform="translate(559.8,464.2)"><g stroke="#a8440e" fill="none" stroke-width="1.2"><path d="M-20.6,-8.6 L-8.6,-16.9 V-3 M-20.6,-8.6 V14.3 L2.3,24 L14.7,16.2 L4.5,12.8"/><path d="M-20.6,-3.8 H-13 M-18.8,-3.8 V13.5 M-14.5,18.5 L-4,11"/><path d="M-0.4,-1 V16.5" stroke-width="2.6"/><path d="M-14,-5 L-1,2 M-11,-7 L0,-1 M-12,-1 L-2,5 M-3,0 L-10,6 M-1,4 L-7,9 M-6,-5 L-4,8" stroke-width="2.4"/><path d="M-3,-3 L-1,-6 M-8,-7 L-7,-10" stroke-width="1.2"/></g></g>
<g transform="translate(670.8,392)"><g stroke="#a8440e" fill="none" stroke-width="1.2"><path d="M-20.6,-8.6 L-8.6,-16.9 V-3 M-20.6,-8.6 V14.3 L2.3,24 L14.7,16.2 L4.5,12.8"/><path d="M-20.6,-3.8 H-13 M-18.8,-3.8 V13.5 M-14.5,18.5 L-4,11"/><path d="M-0.4,-1 V16.5" stroke-width="2.6"/><path d="M-14,-5 L-1,2 M-11,-7 L0,-1 M-12,-1 L-2,5 M-3,0 L-10,6 M-1,4 L-7,9 M-6,-5 L-4,8" stroke-width="2.4"/><path d="M-3,-3 L-1,-6 M-8,-7 L-7,-10" stroke-width="1.2"/></g></g>
<g transform="translate(828.2,289.5)"><g stroke="#a8440e" fill="none" stroke-width="1.2"><path d="M-20.6,-8.6 L-8.6,-16.9 V-3 M-20.6,-8.6 V14.3 L2.3,24 L14.7,16.2 L4.5,12.8"/><path d="M-20.6,-3.8 H-13 M-18.8,-3.8 V13.5 M-14.5,18.5 L-4,11"/><path d="M-0.4,-1 V16.5" stroke-width="2.6"/><path d="M-14,-5 L-1,2 M-11,-7 L0,-1 M-12,-1 L-2,5 M-3,0 L-10,6 M-1,4 L-7,9 M-6,-5 L-4,8" stroke-width="2.4"/><path d="M-3,-3 L-1,-6 M-8,-7 L-7,-10" stroke-width="1.2"/></g></g>
<g transform="translate(599,542.2)"><g stroke="#a8440e" fill="none" stroke-width="1.2"><path d="M-20.6,-8.6 L-8.6,-16.9 V-3 M-20.6,-8.6 V14.3 L2.3,24 L14.7,16.2 L4.5,12.8"/><path d="M-20.6,-3.8 H-13 M-18.8,-3.8 V13.5 M-14.5,18.5 L-4,11"/><path d="M-0.4,-1 V16.5" stroke-width="2.6"/><path d="M-14,-5 L-1,2 M-11,-7 L0,-1 M-12,-1 L-2,5 M-3,0 L-10,6 M-1,4 L-7,9 M-6,-5 L-4,8" stroke-width="2.4"/><path d="M-3,-3 L-1,-6 M-8,-7 L-7,-10" stroke-width="1.2"/></g></g>
<g transform="translate(666.3,498.5)"><g stroke="#a8440e" fill="none" stroke-width="1.2"><path d="M-20.6,-8.6 L-8.6,-16.9 V-3 M-20.6,-8.6 V14.3 L2.3,24 L14.7,16.2 L4.5,12.8"/><path d="M-20.6,-3.8 H-13 M-18.8,-3.8 V13.5 M-14.5,18.5 L-4,11"/><path d="M-0.4,-1 V16.5" stroke-width="2.6"/><path d="M-14,-5 L-1,2 M-11,-7 L0,-1 M-12,-1 L-2,5 M-3,0 L-10,6 M-1,4 L-7,9 M-6,-5 L-4,8" stroke-width="2.4"/><path d="M-3,-3 L-1,-6 M-8,-7 L-7,-10" stroke-width="1.2"/></g></g>
<g transform="translate(777.3,426.2)"><g stroke="#a8440e" fill="none" stroke-width="1.2"><path d="M-20.6,-8.6 L-8.6,-16.9 V-3 M-20.6,-8.6 V14.3 L2.3,24 L14.7,16.2 L4.5,12.8"/><path d="M-20.6,-3.8 H-13 M-18.8,-3.8 V13.5 M-14.5,18.5 L-4,11"/><path d="M-0.4,-1 V16.5" stroke-width="2.6"/><path d="M-14,-5 L-1,2 M-11,-7 L0,-1 M-12,-1 L-2,5 M-3,0 L-10,6 M-1,4 L-7,9 M-6,-5 L-4,8" stroke-width="2.4"/><path d="M-3,-3 L-1,-6 M-8,-7 L-7,-10" stroke-width="1.2"/></g></g>
<g transform="translate(934.8,323.8)"><g stroke="#a8440e" fill="none" stroke-width="1.2"><path d="M-20.6,-8.6 L-8.6,-16.9 V-3 M-20.6,-8.6 V14.3 L2.3,24 L14.7,16.2 L4.5,12.8"/><path d="M-20.6,-3.8 H-13 M-18.8,-3.8 V13.5 M-14.5,18.5 L-4,11"/><path d="M-0.4,-1 V16.5" stroke-width="2.6"/><path d="M-14,-5 L-1,2 M-11,-7 L0,-1 M-12,-1 L-2,5 M-3,0 L-10,6 M-1,4 L-7,9 M-6,-5 L-4,8" stroke-width="2.4"/><path d="M-3,-3 L-1,-6 M-8,-7 L-7,-10" stroke-width="1.2"/></g></g>
<g transform="translate(718.3,580.6)"><g stroke="#a8440e" fill="none" stroke-width="1.2"><path d="M-20.6,-8.6 L-8.6,-16.9 V-3 M-20.6,-8.6 V14.3 L2.3,24 L14.7,16.2 L4.5,12.8"/><path d="M-20.6,-3.8 H-13 M-18.8,-3.8 V13.5 M-14.5,18.5 L-4,11"/><path d="M-0.4,-1 V16.5" stroke-width="2.6"/><path d="M-14,-5 L-1,2 M-11,-7 L0,-1 M-12,-1 L-2,5 M-3,0 L-10,6 M-1,4 L-7,9 M-6,-5 L-4,8" stroke-width="2.4"/><path d="M-3,-3 L-1,-6 M-8,-7 L-7,-10" stroke-width="1.2"/></g></g>
<g transform="translate(785.6,536.9)"><g stroke="#a8440e" fill="none" stroke-width="1.2"><path d="M-20.6,-8.6 L-8.6,-16.9 V-3 M-20.6,-8.6 V14.3 L2.3,24 L14.7,16.2 L4.5,12.8"/><path d="M-20.6,-3.8 H-13 M-18.8,-3.8 V13.5 M-14.5,18.5 L-4,11"/><path d="M-0.4,-1 V16.5" stroke-width="2.6"/><path d="M-14,-5 L-1,2 M-11,-7 L0,-1 M-12,-1 L-2,5 M-3,0 L-10,6 M-1,4 L-7,9 M-6,-5 L-4,8" stroke-width="2.4"/><path d="M-3,-3 L-1,-6 M-8,-7 L-7,-10" stroke-width="1.2"/></g></g>
<g transform="translate(896.7,464.6)"><g stroke="#a8440e" fill="none" stroke-width="1.2"><path d="M-20.6,-8.6 L-8.6,-16.9 V-3 M-20.6,-8.6 V14.3 L2.3,24 L14.7,16.2 L4.5,12.8"/><path d="M-20.6,-3.8 H-13 M-18.8,-3.8 V13.5 M-14.5,18.5 L-4,11"/><path d="M-0.4,-1 V16.5" stroke-width="2.6"/><path d="M-14,-5 L-1,2 M-11,-7 L0,-1 M-12,-1 L-2,5 M-3,0 L-10,6 M-1,4 L-7,9 M-6,-5 L-4,8" stroke-width="2.4"/><path d="M-3,-3 L-1,-6 M-8,-7 L-7,-10" stroke-width="1.2"/></g></g>
<g transform="translate(1054.2,362.2)"><g stroke="#a8440e" fill="none" stroke-width="1.2"><path d="M-20.6,-8.6 L-8.6,-16.9 V-3 M-20.6,-8.6 V14.3 L2.3,24 L14.7,16.2 L4.5,12.8"/><path d="M-20.6,-3.8 H-13 M-18.8,-3.8 V13.5 M-14.5,18.5 L-4,11"/><path d="M-0.4,-1 V16.5" stroke-width="2.6"/><path d="M-14,-5 L-1,2 M-11,-7 L0,-1 M-12,-1 L-2,5 M-3,0 L-10,6 M-1,4 L-7,9 M-6,-5 L-4,8" stroke-width="2.4"/><path d="M-3,-3 L-1,-6 M-8,-7 L-7,-10" stroke-width="1.2"/></g></g>
<path d="M160,397.5 L168.5,405.5 M168.5,397.5 L160,405.5" stroke="#2a3ad8" stroke-width="1.6"/>
<line x1="162.4" y1="401.8" x2="113.9" y2="433.4" stroke="#aa1a5c" stroke-width="1" stroke-dasharray="2.6,2"/>
<line x1="279.5" y1="439.5" x2="231" y2="471.1" stroke="#aa1a5c" stroke-width="1" stroke-dasharray="2.6,2"/>
<line x1="386" y1="473.7" x2="337.4" y2="505.3" stroke="#aa1a5c" stroke-width="1" stroke-dasharray="2.6,2"/>
<line x1="492.5" y1="508" x2="443.9" y2="539.6" stroke="#aa1a5c" stroke-width="1" stroke-dasharray="2.6,2"/>
<line x1="599" y1="542.2" x2="550.4" y2="573.8" stroke="#aa1a5c" stroke-width="1" stroke-dasharray="2.6,2"/>
<line x1="718.3" y1="580.6" x2="669.7" y2="612.2" stroke="#aa1a5c" stroke-width="1" stroke-dasharray="2.6,2"/>
<line x1="113.9" y1="433.4" x2="61.1" y2="467.8" stroke="#aa1a5c" stroke-width="1" stroke-dasharray="2.6,2"/>
<line x1="669.7" y1="612.2" x2="616.9" y2="646.5" stroke="#aa1a5c" stroke-width="1" stroke-dasharray="2.6,2"/>
<line x1="113.9" y1="433.4" x2="669.7" y2="612.2" stroke="#aa1a5c" stroke-width="1.1"/>
<line x1="61.1" y1="467.8" x2="616.9" y2="646.5" stroke="#aa1a5c" stroke-width="1.1"/>
<line x1="107.9" y1="432.8" x2="119.9" y2="434" stroke="#aa1a5c" stroke-width="3.4"/>
<line x1="225" y1="470.5" x2="237" y2="471.7" stroke="#aa1a5c" stroke-width="3.4"/>
<line x1="331.4" y1="504.7" x2="343.4" y2="505.9" stroke="#aa1a5c" stroke-width="3.4"/>
<line x1="437.9" y1="539" x2="449.9" y2="540.2" stroke="#aa1a5c" stroke-width="3.4"/>
<line x1="544.4" y1="573.2" x2="556.4" y2="574.4" stroke="#aa1a5c" stroke-width="3.4"/>
<line x1="663.7" y1="611.6" x2="675.7" y2="612.8" stroke="#aa1a5c" stroke-width="3.4"/>
<line x1="55.1" y1="467.2" x2="67.1" y2="468.4" stroke="#aa1a5c" stroke-width="3.4"/>
<line x1="610.9" y1="645.9" x2="622.9" y2="647.1" stroke="#aa1a5c" stroke-width="3.4"/>
<line x1="718.3" y1="580.6" x2="773.9" y2="598.5" stroke="#aa1a5c" stroke-width="1" stroke-dasharray="2.6,2"/>
<line x1="785.6" y1="536.9" x2="841.2" y2="554.7" stroke="#aa1a5c" stroke-width="1" stroke-dasharray="2.6,2"/>
<line x1="896.7" y1="464.6" x2="952.3" y2="482.5" stroke="#aa1a5c" stroke-width="1" stroke-dasharray="2.6,2"/>
<line x1="1054.2" y1="362.2" x2="1109.8" y2="380.1" stroke="#aa1a5c" stroke-width="1" stroke-dasharray="2.6,2"/>
<line x1="773.9" y1="598.5" x2="814.9" y2="611.7" stroke="#aa1a5c" stroke-width="1" stroke-dasharray="2.6,2"/>
<line x1="1109.8" y1="380.1" x2="1150.8" y2="393.3" stroke="#aa1a5c" stroke-width="1" stroke-dasharray="2.6,2"/>
<line x1="773.9" y1="598.5" x2="1109.8" y2="380.1" stroke="#aa1a5c" stroke-width="1.1"/>
<line x1="814.9" y1="611.7" x2="1150.8" y2="393.3" stroke="#aa1a5c" stroke-width="1.1"/>
<path d="M773.9,598.5 l-3,-3 l6,6 M773.9,598.5 l-3,3 l6,-6" stroke="#aa1a5c" stroke-width="1.8"/>
<path d="M841.2,554.7 l-3,-3 l6,6 M841.2,554.7 l-3,3 l6,-6" stroke="#aa1a5c" stroke-width="1.8"/>
<path d="M952.3,482.5 l-3,-3 l6,6 M952.3,482.5 l-3,3 l6,-6" stroke="#aa1a5c" stroke-width="1.8"/>
<path d="M1109.8,380.1 l-3,-3 l6,6 M1109.8,380.1 l-3,3 l6,-6" stroke="#aa1a5c" stroke-width="1.8"/>
<path d="M814.9,611.7 l-3,-3 l6,6 M814.9,611.7 l-3,3 l6,-6" stroke="#aa1a5c" stroke-width="1.8"/>
<path d="M1150.8,393.3 l-3,-3 l6,6 M1150.8,393.3 l-3,3 l6,-6" stroke="#aa1a5c" stroke-width="1.8"/>
<text x="168.6" y="469.7" text-anchor="middle" font-family="Liberation Sans" font-size="16.5" letter-spacing="-0.5" fill="#b0286a">5,498</text>
<text x="280" y="506" text-anchor="middle" font-family="Liberation Sans" font-size="16.5" letter-spacing="-0.5" fill="#b0286a">5,000</text>
<text x="387" y="540.4" text-anchor="middle" font-family="Liberation Sans" font-size="16.5" letter-spacing="-0.5" fill="#b0286a">5,000</text>
<text x="492.9" y="574" text-anchor="middle" font-family="Liberation Sans" font-size="16.5" letter-spacing="-0.5" fill="#b0286a">5,000</text>
<text x="606" y="610.3" text-anchor="middle" font-family="Liberation Sans" font-size="16.5" letter-spacing="-0.5" fill="#b0286a">5,603</text>
<text x="335.3" y="574.8" text-anchor="middle" font-family="Liberation Sans" font-size="16.5" letter-spacing="-0.5" fill="#b0286a">26,100</text>
<text x="811.3" y="593" text-anchor="middle" font-family="Liberation Sans" font-size="16.5" letter-spacing="-0.5" fill="#b0286a">4,500</text>
<text x="899.8" y="534.8" text-anchor="middle" font-family="Liberation Sans" font-size="16.5" letter-spacing="-0.5" fill="#b0286a">7,425</text>
<text x="986" y="519.3" text-anchor="middle" font-family="Liberation Sans" font-size="16.5" letter-spacing="-0.5" fill="#b0286a">22,450</text>
<text x="1034.7" y="447" text-anchor="middle" font-family="Liberation Sans" font-size="16.5" letter-spacing="-0.5" fill="#b0286a">10,525</text>
<path d="M83.4,316.4 L83.4,341.2 M83.4,332.5 L127.2,332.5" stroke="#aa1a5c" stroke-width="1.2"/>
<polygon points="72.8,332.5 83.4,332.5 83.4,341.2" fill="#aa1a5c"/>
<text x="88.9" y="328.7" font-family="Liberation Sans" font-size="12" fill="#b0286a">±0,000</text>
<path d="M87,378.4 L87,402.5 M87,393.4 L128,393.4" stroke="#aa1a5c" stroke-width="1.2"/>
<polygon points="77.2,393.4 87,393.4 87,402.5" fill="#aa1a5c"/>
<text x="92.5" y="389.6" font-family="Liberation Sans" font-size="12" fill="#b0286a">-2,850</text>
<line x1="84.6" y1="341.3" x2="162.5" y2="337.4" stroke="#aa1a5c" stroke-width="1" stroke-dasharray="2.6,2"/>
<line x1="87" y1="402.5" x2="162" y2="402" stroke="#aa1a5c" stroke-width="1" stroke-dasharray="2.6,2"/>
<path d="M43.5,631 L43.5,662.7 L64.4,649.1 M43.5,662.7 L72.4,672.5" stroke="#1a8cac" stroke-width="2.6" fill="none"/>
<text x="38.5" y="623.5" font-family="Liberation Sans" font-weight="bold" font-size="13.5" fill="#1a8cac">Z</text>
<text x="67" y="649.5" font-family="Liberation Sans" font-weight="bold" font-size="13.5" fill="#1a8cac">Y</text>
<text x="79.3" y="682" font-family="Liberation Sans" font-weight="bold" font-size="13.5" fill="#1a8cac">X</text>
<!-- title icon -->
<text x="9" y="20" font-family="Liberation Sans" font-weight="bold" font-size="13" fill="#b8141c" letter-spacing="-1.8" transform="skewX(-6) translate(2,0)">X6</text>
<!-- window controls -->
<path d="M1071,15.5 H1081.5" stroke="#fff" stroke-width="1"/>
<rect x="1116.5" y="10.5" width="9" height="9" fill="none" stroke="#fff" stroke-width="1"/>
<path d="M1162,10 L1172,20 M1172,10 L1162,20" stroke="#fff" stroke-width="1.1"/>
<!-- row1 toolbar -->
<path d="M11.5,58.5 H20 L25,63.5 V75.5 H11.5 Z" fill="#fff" stroke="#000" stroke-width="1"/>
<path d="M20,58.5 V63.5 H25" fill="none" stroke="#000" stroke-width="1"/>
<path d="M40.5,63 H46 L47.5,65 H54 V75 H40.5 Z" fill="#e8e010" stroke="#000" stroke-width="0.9"/>
<path d="M40.5,75 L44,68.5 H59.5 L55,75 Z" fill="#8a8a1a" stroke="#000" stroke-width="0.9"/>
<path d="M50,63 Q53,57.5 58,61.5" fill="none" stroke="#000" stroke-width="1.2"/>
<path d="M55.5,60 L60,61 L58,65 Z" fill="#000"/>
<rect x="73.5" y="58.5" width="16.5" height="17" fill="#8a8a10" stroke="#000" stroke-width="1"/>
<rect x="76.5" y="59" width="10" height="8" fill="#eee"/>
<rect x="77" y="70" width="9" height="5.5" fill="#000"/><rect x="78" y="71.5" width="2.5" height="4" fill="#fff"/>
<rect x="107" y="57" width="14" height="7" fill="#fff" stroke="#444" stroke-width="0.8"/>
<rect x="103.5" y="63.5" width="21" height="9" rx="2" fill="#b8b49a" stroke="#222" stroke-width="0.9"/>
<rect x="106.5" y="70" width="15" height="7.5" fill="#fff" stroke="#444" stroke-width="0.8"/>
<path d="M108,73 H120 M108,75.5 H120" stroke="#999" stroke-width="0.7"/>
<path d="M132.5,53.5 V79.5" stroke="#6a7078" stroke-width="1"/>
<path d="M143,58 L145,56.5 H161 V73 L158.5,75.5 H141.5 V59.5 Z" fill="#fff" stroke="#111" stroke-width="0.8"/>
<rect x="144.5" y="56.5" width="16.5" height="16.5" fill="#d41a1a"/>
<path d="M152.5,59 L152.5,66.5 L146.5,71 M152.5,66.5 L158.5,71" fill="none" stroke="#f8c8b0" stroke-width="1.3"/>
<path d="M178.5,65 L182,64 L181,68 Z" fill="#1a2aa0"/>
<path d="M180,66 Q185,61.5 189,66 Q190,69.5 187.5,71.5" fill="none" stroke="#1a2aa0" stroke-width="1.4"/>
<path d="M201,66.5 H209.5 L205.25,70.5 Z" fill="#111"/>
<path d="M232,66 Q227,61.5 223,66 Q222,69.5 224.5,71.5" fill="none" stroke="#b8bcc0" stroke-width="1.4"/>
<path d="M233.5,65 L230,64 L231,68 Z" fill="#b8bcc0"/>
<path d="M247.5,66.5 H255.5 L251.5,70.5 Z" fill="#a0a4a8"/>
<!-- row2 toolbar -->
<g fill="#fff" stroke="#000" stroke-width="0.9">
<path d="M9,104.5 L15,99.5 H28 L22,104.5 Z"/><path d="M9,101 L15,96 H28 L22,101 Z"/><path d="M9,97.5 L15,92.5 H28 L22,97.5 Z"/>
</g>
<text x="40.5" y="95" font-family="Liberation Sans" font-weight="bold" font-size="8.5" textLength="19" lengthAdjust="spacingAndGlyphs" fill="#000">±0.00</text>
<path d="M40,97.5 H60" stroke="#1030d0" stroke-width="1.2"/>
<path d="M42,97.5 H55 L48.5,104 Z" fill="#1030d0"/>
<path d="M49,97.5 H55 L49.5,103" fill="#fff"/>
<path d="M40,104.5 H57" stroke="#222" stroke-width="2.4" stroke-dasharray="1.8,0.5"/>
<path d="M69,84.5 V111" stroke="#6a7078" stroke-width="1"/>
<rect x="80.5" y="88.5" width="18" height="18" fill="#fff" stroke="#333" stroke-width="0.8"/>
<rect x="80.5" y="88.5" width="18" height="4.5" fill="#9a9a9a"/>
<rect x="81" y="93" width="4.5" height="13" fill="#c8d020"/>
<path d="M85.5,88.5 V106.5 M90,88.5 V106.5 M94.5,88.5 V106.5 M80.5,93 H98.5 M80.5,97.5 H98.5 M80.5,102 H98.5" stroke="#444" stroke-width="0.6"/>
<rect x="114" y="88.5" width="17" height="18.5" fill="#e8ecf0" stroke="#333" stroke-width="0.9"/>
<path d="M118,92 H129 M118,95 H129 M118,98 H129 M118,101 H129 M118,104 H129" stroke="#222" stroke-width="1"/>
<circle cx="113" cy="93" r="1.3" fill="none" stroke="#222"/><circle cx="113" cy="98" r="1.3" fill="none" stroke="#222"/><circle cx="113" cy="103" r="1.3" fill="none" stroke="#222"/>
<path d="M140.7,84.5 V111.3" stroke="#6a7078" stroke-width="1"/>
<path d="M148.5,100 L160,87.5 L170,93 L158.5,105.5 Z" fill="#e0e4ea" stroke="#111" stroke-width="0.9"/>
<path d="M148.5,100 V103 L158.5,108.5 L170,96 V93 L158.5,105.5 Z" fill="#9aa0a8" stroke="#111" stroke-width="0.9"/>
<path d="M153.5,98.5 L160.5,91 L166,94 L159,101.5 Z" fill="#fff" stroke="#1a2a9a" stroke-width="1.2"/>
<path d="M178,97 H185.5 L181.75,101 Z" fill="#111"/>
<rect x="194.5" y="89" width="19.5" height="14.5" fill="#f4f6f8" stroke="#1a1a90" stroke-width="1.1"/>
<path d="M194.5,91 H214 M204,91 V103.5 M194.5,97 H214" stroke="#8a8a9a" stroke-width="0.8"/>
<rect x="203" y="99" width="12" height="8" rx="1" fill="#222"/><circle cx="209" cy="103" r="2" fill="#fff"/>
<!-- tab toolbar icons -->
<path d="M267,84 Q283,86 288.5,104.5" fill="none" stroke="#1a1a80" stroke-width="1.2"/>
<path d="M285,104.5 H291" stroke="#1a1a80" stroke-width="1"/>
<path d="M295.5,84 V104" stroke="#7a8088" stroke-width="1"/>
<g stroke="#222" stroke-width="0.7" fill="none">
<path d="M311,94 L318,90 V84 H332 V104 H316 L311,100 Z" fill="#fff" stroke-width="1"/>
<path d="M311,97 H332 M311,100 H332 M318,87 H332 M318,90 H332 M311,94 H332 M314,92 V102 M317,90 V104 M320,84 V104 M323,84 V104 M326,84 V104 M329,84 V104"/>
<rect x="320.5" y="90.5" width="6" height="9" fill="#fff" stroke-width="1.2"/>
</g>
<path d="M338.5,84 V104" stroke="#7a8088" stroke-width="1"/>
<g stroke="#222" stroke-width="1" fill="none">
<path d="M354,89 H374 M354,95 H374 M354,101 H374 M357,84 V104 M363,84 V104 M369,84 V104 M354,89 V104 H374"/>
<path d="M383,84 H404 M383,87 H398 M383,90 H398 M383,93 H398 M383,96 H398 M386,84 V97 M389,84 V97 M392,84 V97 M395,84 V97 M398,84 L404,88 L398,92 L404,96 L398,98 M383,104 L386,97 L389,104 L392,97 L395,104 L398,97" stroke-width="0.9"/>
<path d="M411,88 H433 M411,93 H433 M411,99 H433 M416,84 V104 M428,84 V104 M412,84 L419,91 M432,84 L425,91 M412,104 L419,97 M432,104 L425,97" stroke-width="0.8"/>
<rect x="419" y="91" width="6" height="6" stroke-width="1.4"/>
<path d="M440,88 H462 M440,93 H462 M440,99 H462 M440,84 L446,88 H456 L462,84 M446,88 V104 M451,88 V104 M456,88 V104 M443,84 V104 M459,84 V104" stroke-width="0.8"/>
<path d="M446,88 V104 M451,88 V104" stroke-width="1.4"/>
</g>
<path d="M468.5,84 V104" stroke="#7a8088" stroke-width="1"/>
<g stroke="#444" stroke-width="0.8" fill="none">
<rect x="484.5" y="83.5" width="18" height="18" stroke="#111" stroke-width="1.2"/>
<path d="M484.5,89.5 H502.5 M484.5,95.5 H502.5 M490.5,83.5 V101.5 M496.5,83.5 V101.5 M484.5,95.5 L496.5,83.5 M484.5,101.5 L502.5,83.5 M490.5,101.5 L502.5,89.5"/>
<path d="M512,86 H530 M512,90 H530 M512,94 H530 M516,84 V98 M521,84 V98 M526,84 V98 M512,88 L522,98" />
<path d="M516,86 L525,95" stroke="#e020e0" stroke-width="2.2"/>
</g>
<path d="M496,100 L499,104 L506,95" fill="none" stroke="#2a70b0" stroke-width="2"/>
<path d="M523,100 L526,104 L533,95" fill="none" stroke="#2a70b0" stroke-width="2"/>
<path d="M541,84 V104" stroke="#7a8088" stroke-width="1"/>
<path d="M556,84 Q570,86 576,104.5" fill="none" stroke="#222" stroke-width="1.1"/>
<path d="M557,94 L566,104 M566,94 L557,104" stroke="#e03030" stroke-width="1.8"/>
<g stroke="#222" stroke-width="0.7" fill="none">
<path d="M585,94 L592,90 V84 H606 V104 H590 L585,100 Z" fill="#fff" stroke-width="1"/>
<path d="M585,97 H606 M585,100 H606 M592,87 H606 M592,90 H606 M585,94 H606 M588,92 V102 M591,90 V104 M594,84 V104 M597,84 V104 M600,84 V104 M603,84 V104"/>
<rect x="594.5" y="90.5" width="6" height="9" fill="#fff" stroke-width="1.2"/>
</g>
<path d="M585,96 L593,104 M593,96 L585,104" stroke="#e03030" stroke-width="1.8"/>
<path d="M618,89 L629,100 M629,89 L618,100" stroke="#e03030" stroke-width="1.6"/>
<!-- tab strip arrow -->
<path d="M1181,58 L1185.5,62.5 L1181,67 Z" fill="#111"/>

<!-- left vertical toolbar -->
<g stroke="#111" stroke-width="1.1" fill="none">
<path d="M11.5,127.5 V142.5 L15,139 L18,145.5 L20.5,144.5 L17.5,138 H22.5 Z" fill="#fff"/>
<circle cx="13.6" cy="164.3" r="7"/><path d="M18.8,169.5 L25.5,176.5" stroke-width="2.8"/>
<path d="M22,157 L26,160 L22,163 Z" fill="#111" stroke="none"/>
<path d="M15.5,189 V202 L7,207 M15.5,202 L24.5,207 M13,192 L15.5,188.5 L18,192" /><path d="M6,208 L9,205 L10,207.5 Z M25.5,208 L22.5,205 L21.5,207.5 Z" fill="#111"/>
<path d="M22,188 L26,191 L22,194 Z" fill="#111" stroke="none"/>
<path d="M8,225 L12,221 H21 V232 L17,236 H8 Z M8,225 H17 V236 M17,225 L21,221 M11,225 V229 H14 V232"/>
<path d="M22,219 L26,222 L22,225 Z" fill="#111" stroke="none"/>
</g>
<rect x="6" y="250" width="7" height="4" fill="#901010"/><rect x="14" y="250" width="7" height="4" fill="#101090"/>
<rect x="6" y="255" width="7" height="4" fill="#d02020"/><rect x="14" y="255" width="7" height="4" fill="#10a020"/>
<rect x="6" y="260" width="7" height="4" fill="#c08050"/><rect x="14" y="260" width="7" height="4" fill="#20c020"/>
<rect x="6" y="265" width="7" height="4" fill="#d0c020"/><rect x="14" y="265" width="7" height="4" fill="#3090e0"/>
<path d="M7,286 H18 M15,283.5 L18,286 L15,288.5" stroke="#1a30d0" stroke-width="1.1" fill="none"/>
<path d="M22,283 L26,286 L22,289 Z" fill="#111"/>
<path d="M5,300 L10,290 V300 Z" fill="#6a7a9a" stroke="#111" stroke-width="1"/>
<path d="M16,300 L21,290 V300 Z" fill="#fff" stroke="#111" stroke-width="1"/>
<g stroke="#111" stroke-width="1" fill="none">
<path d="M13.5,321 L19.5,315 L25.5,321 L19.5,327 Z" fill="#fff"/>
<path d="M13.5,321 H6 M8,319 L6,321 L8,323 M19.5,315 L24,310.5 M21.5,310.5 H24 V313 M19.5,327 L24,331.5 M21.5,331.5 H24 V329"/>
</g>
<g stroke="#1a30d0" stroke-width="1" fill="none" stroke-dasharray="1.5,1">
<path d="M9,346 H26 M9,352 H26 M14,341 V358 M20,341 V358"/>
</g>
<g stroke="#111" stroke-width="1" fill="none">
<circle cx="8" cy="346" r="1.8"/><circle cx="8" cy="352" r="1.8"/><circle cx="14" cy="358" r="1.8"/><circle cx="20" cy="358" r="1.8"/>
</g>
<path d="M22,340 L26,343 L22,346 Z" fill="#111"/>
<g stroke="#111" stroke-width="1.2" fill="none">
<path d="M6,374 V391 H24 Z"/><path d="M9,382 V388 H16 Z"/>
</g>
<path d="M6.5,391 H23" stroke="#fff" stroke-width="1" stroke-dasharray="1,1.5"/>
<path d="M22,371 L26,374 L22,377 Z" fill="#111"/>
<g stroke="#111" stroke-width="1" fill="none">
<path d="M8,408 L23,423 M8,423 L23,408"/><circle cx="14" cy="419" r="1.6"/>
</g>
<path d="M5,420 L15,429" stroke="#9aa" stroke-width="1"/>
<path d="M22,404 L26,407 L22,410 Z" fill="#111"/>
<path d="M6,444 L19,434 M8,439.5 L6,444 L11,443 M17,434.5 L19,434 L18.5,436.5" stroke="#111" stroke-width="1.3" fill="none"/>
<text x="13" y="453" font-family="Liberation Serif" font-weight="bold" font-size="12" fill="#111">A</text>
<g stroke="#111" stroke-width="1" fill="none">
<path d="M5,475 L11,469 H26 L20,475 Z" fill="#fff"/><path d="M5,479 L11,473 M5,479 H20 L26,473"/><path d="M5,482 L11,476 M5,482 H20"/>
<path d="M16,480 L24,473 V481 L20,485 Z" fill="#fff"/>
</g>
<path d="M8,473 H20" stroke="#30a030" stroke-width="1.2"/>
<g fill="none" stroke="#111" stroke-width="1">
<path d="M8,505 Q10,499 15,498 M19,500 Q23,503 22,508 M19,516 Q14,519 10,515"/>
</g>
<text x="13" y="502" font-family="Liberation Sans" font-size="7.5" fill="#1a2ab0">1</text>
<text x="6" y="517" font-family="Liberation Sans" font-size="7.5" fill="#1a2ab0">3</text>
<text x="20" y="517" font-family="Liberation Sans" font-size="7.5" fill="#1a2ab0">2</text>
<g fill="none" stroke="#111" stroke-width="1.4">
<path d="M9,549 V537 H20 V543 M13,544 V540 H17"/>
</g>
<path d="M6,551 V535 L9,532 H24 V541" fill="none" stroke="#8a8e94" stroke-width="0.9"/>
<path d="M6,566 L9,563 L12,566 M9,563 V571 H17 V575 H23 V567 M20,570 L23,567 L26,570" fill="none" stroke="#111" stroke-width="1.1"/>
<path d="M6,600 H26 M9,597 L6,600 L9,603 M23,597 L26,600 L23,603" fill="none" stroke="#1a30d0" stroke-width="1.3"/>
<path d="M13,597 V592 H19 V597" fill="none" stroke="#1a30d0" stroke-width="1.1"/>
<rect x="6" y="604" width="21" height="3" fill="#111"/>
<path d="M10,610 L12,607 M15,610 L17,607 M20,610 L22,607" stroke="#111" stroke-width="1"/>
<path d="M8,634 L18,624 L23,629 L13,639 Z" fill="#fff" stroke="#111" stroke-width="1.1"/>
<path d="M18,624 L21,619 L27,625 L23,629" fill="#ddd" stroke="#111" stroke-width="1.1"/>
<g fill="none" stroke="#111" stroke-width="1.2">
<circle cx="10" cy="666" r="3.6"/><circle cx="21" cy="666" r="3.6"/><path d="M13.6,666 H17.4 M6.4,666 L8,657 H11 M24.6,666 L23,657 H20"/>
</g>
<path d="M6.5,685 L10,688.5 L12.5,686 L9,682.5 Q14,681.5 16,685.5 Q17,688.5 15.5,690.5 L26,701 Q27,704 24,704.5 L13,693 Q10,694.5 7.5,692.5 Q5,689.5 6.5,685 Z" fill="#fff" stroke="#111" stroke-width="1.1"/>
<!-- right scrollbar -->
<path d="M1175,122 L1183,129 M1183,122 L1175,129" stroke="#707070" stroke-width="1"/>
<rect x="1175.5" y="140.5" width="8.5" height="8" fill="none" stroke="#707070" stroke-width="1"/>
<path d="M1175.5,142 H1184" stroke="#707070" stroke-width="1"/>
<path d="M1176,170.5 L1179.5,166 L1183,170.5" fill="none" stroke="#404040" stroke-width="2"/>
<rect x="1172" y="176" width="15" height="16" fill="#cdcdcd"/>
<path d="M1176,677.5 L1179.5,682 L1183,677.5" fill="none" stroke="#505050" stroke-width="2"/>
<g transform="translate(0,1.5)"><!-- bottom view toolbar -->
<g fill="none" stroke="#111" stroke-width="1.2">
<circle cx="43.5" cy="696" r="4"/><path d="M46.5,699 L50,702.5" stroke-width="2"/><path d="M41.5,696 H45.5 M43.5,694 V698"/>
<circle cx="62.5" cy="696" r="4"/><path d="M65.5,699 L69,702.5" stroke-width="2"/><path d="M60.5,696 H64.5"/>
<path d="M78,693 V691 H80 M86,691 H88 V693 M88,699 V701 H86 M80,701 H78 V699 M80,693 L82,695 M86,693 L84,695 M86,699 L84,697 M80,699 L82,697"/>
<path d="M96,696 H107 M101.5,690.5 V701.5 M98,694 L96,696 L98,698 M105,694 L107,696 L105,698 M99.5,692.5 L101.5,690.5 L103.5,692.5 M99.5,699.5 L101.5,701.5 L103.5,699.5"/>
<path d="M124,693 Q121,690 118,691.5 Q115,694 117,698.5 Q120,701.5 124,699.5 H126 M122,697 H126 V700"/>
</g>
<g fill="none" stroke="#b0b0b0" stroke-width="1.2">
<circle cx="141" cy="696" r="3.6"/><path d="M143.5,699 L146,702" stroke-width="1.8"/><path d="M134,696 L137,693.5 M134,696 L137,698.5"/>
<circle cx="158" cy="696" r="3.6"/><path d="M160.5,699 L163,702" stroke-width="1.8"/><path d="M164,696 L161,693.5"/>
</g>
<path d="M178,692.5 L174.5,696 L178,699.5" fill="none" stroke="#333" stroke-width="1.8"/>
<rect x="184" y="690" width="17" height="14" fill="#cdcdcd"/>
<path d="M1161.5,693.5 L1165,697 L1161.5,700.5" fill="none" stroke="#505050" stroke-width="1.8"/>
</g><!-- search icon -->
<circle cx="19.5" cy="716.5" r="5" fill="none" stroke="#fff" stroke-width="1.1"/>
<path d="M15.5,720.5 L9,727" stroke="#fff" stroke-width="1.2"/>
<!-- status bar icons -->
<rect x="847" y="710" width="18" height="17" fill="#f4f000" stroke="#8aa8c8" stroke-width="1"/>
<path d="M849,712 L863,725 M863,712 L849,725" stroke="#111" stroke-width="1"/><circle cx="856" cy="718.5" r="1.6" fill="#111"/>
<rect x="867" y="710" width="19" height="17" fill="#f4f000" stroke="#8aa8c8" stroke-width="1"/>
<path d="M867,714.5 H886 M867,719 H886 M867,723.5 H886 M872,710 V727 M877,710 V727 M882,710 V727" stroke="#777" stroke-width="0.8"/>
<path d="M870,712 V724 L873,721 L876,726 L878,725 L875,720 H879 Z" fill="#fff" stroke="#111" stroke-width="0.9"/>
<path d="M890,711.5 H902 M890,715 H902 M890,718.5 H902 M890,722 H902 M890,725.5 H902 M890,711.5 V725.5 M902,711.5 V725.5" stroke="#aaa" stroke-width="1"/>
<path d="M909,724 V716 L913,713 H918 V718 M912,724 V719 H916 M914,716 L918,713 H922 V721" fill="none" stroke="#111" stroke-width="1.4"/>
<path d="M929,724 V716 L933,713 H938 V718 M932,724 V719 H936 M934,716 L938,713 H942 V721" fill="none" stroke="#e020d0" stroke-width="2"/>
<path d="M933,724 V718 H937" fill="none" stroke="#111" stroke-width="1.2"/>
<rect x="950.5" y="711.5" width="13" height="14" fill="none" stroke="#aaa" stroke-dasharray="1.5,1"/><rect x="955" y="711.5" width="8.5" height="8" fill="none" stroke="#aaa"/>
<rect x="970" y="711.5" width="14" height="14" fill="none" stroke="#aaa" stroke-width="1.2"/><path d="M977,711.5 V725.5 M970,718.5 H984" stroke="#aaa" stroke-width="1.2"/>
<path d="M993,718 L998,713 L1003,718 L998,723 Z M993,718 H988 M990,716 L988,718 L990,720 M998,713 L1002,709.5 M998,723 L1002,726.5" fill="none" stroke="#111" stroke-width="1.3"/>
<path d="M1011,715 L1013,713 L1015,715 M1013,713 V719 H1019 V722 H1023 V717" fill="none" stroke="#b0b8c0" stroke-width="1.1"/>
<path d="M1029,725 H1045 M1031,723 L1029,725 L1031,727 M1043,723 L1045,725 L1043,727 M1037,725 V716 L1040,712" fill="none" stroke="#b0b8c0" stroke-width="1.1"/>
<rect x="1048" y="710" width="18.5" height="17" fill="#f4f000" stroke="#8aa8c8" stroke-width="1"/>
<rect x="1051.5" y="713" width="12" height="11" fill="none" stroke="#111" stroke-width="1.2"/>
<path d="M1051.5,715.75 H1063.5 M1051.5,718.5 H1063.5 M1051.5,721.25 H1063.5 M1054.5,713 V724 M1057.5,713 V724 M1060.5,713 V724" stroke="#111" stroke-width="1"/>
<path d="M1072,712 V725 M1069.5,722 L1072,725.5 L1074.5,722 M1079,712 V725 M1076.5,722 L1079,725.5 L1081.5,722" fill="none" stroke="#111" stroke-width="1.3"/>
<path d="M1092,726 V712 M1089.5,715 L1092,711.5 L1094.5,715" fill="none" stroke="#e02020" stroke-width="1.4"/>
<path d="M1099,711 V719" stroke="#111" stroke-width="1.2"/><circle cx="1099" cy="722" r="2.8" fill="none" stroke="#1a3ad0" stroke-width="1.4"/>
<path d="M1112,724 V713 M1112,724 L1122,727 M1112,724 L1108,727" fill="none" stroke="#20a020" stroke-width="1.4"/>
<path d="M1112,724 L1121,726.5" stroke="#e02020" stroke-width="1.3"/><path d="M1112,724 L1107.5,727" stroke="#d06020" stroke-width="1.3"/>
<text x="1128" y="726" font-family="Liberation Sans" font-size="11.5" fill="#111">1</text>
<text x="1135.5" y="720" font-family="Liberation Sans" font-size="10" fill="#111">2</text>
<rect x="1147" y="710" width="19" height="17" fill="#f4f000" stroke="#8aa8c8" stroke-width="1"/>
<path d="M1151,726 L1163,712 M1153,713 H1162 V720 H1157 M1153,713 V726" fill="none" stroke="#111" stroke-width="1.2"/>
<path d="M1169,726 V720 Q1170,714 1176,713 H1180 M1180,713 L1183,711" fill="none" stroke="#111" stroke-width="1.2"/>
<rect x="1172" y="713" width="10" height="12" fill="none" stroke="#999" stroke-width="0.8" stroke-dasharray="1,1"/>

</svg>
</body></html>
